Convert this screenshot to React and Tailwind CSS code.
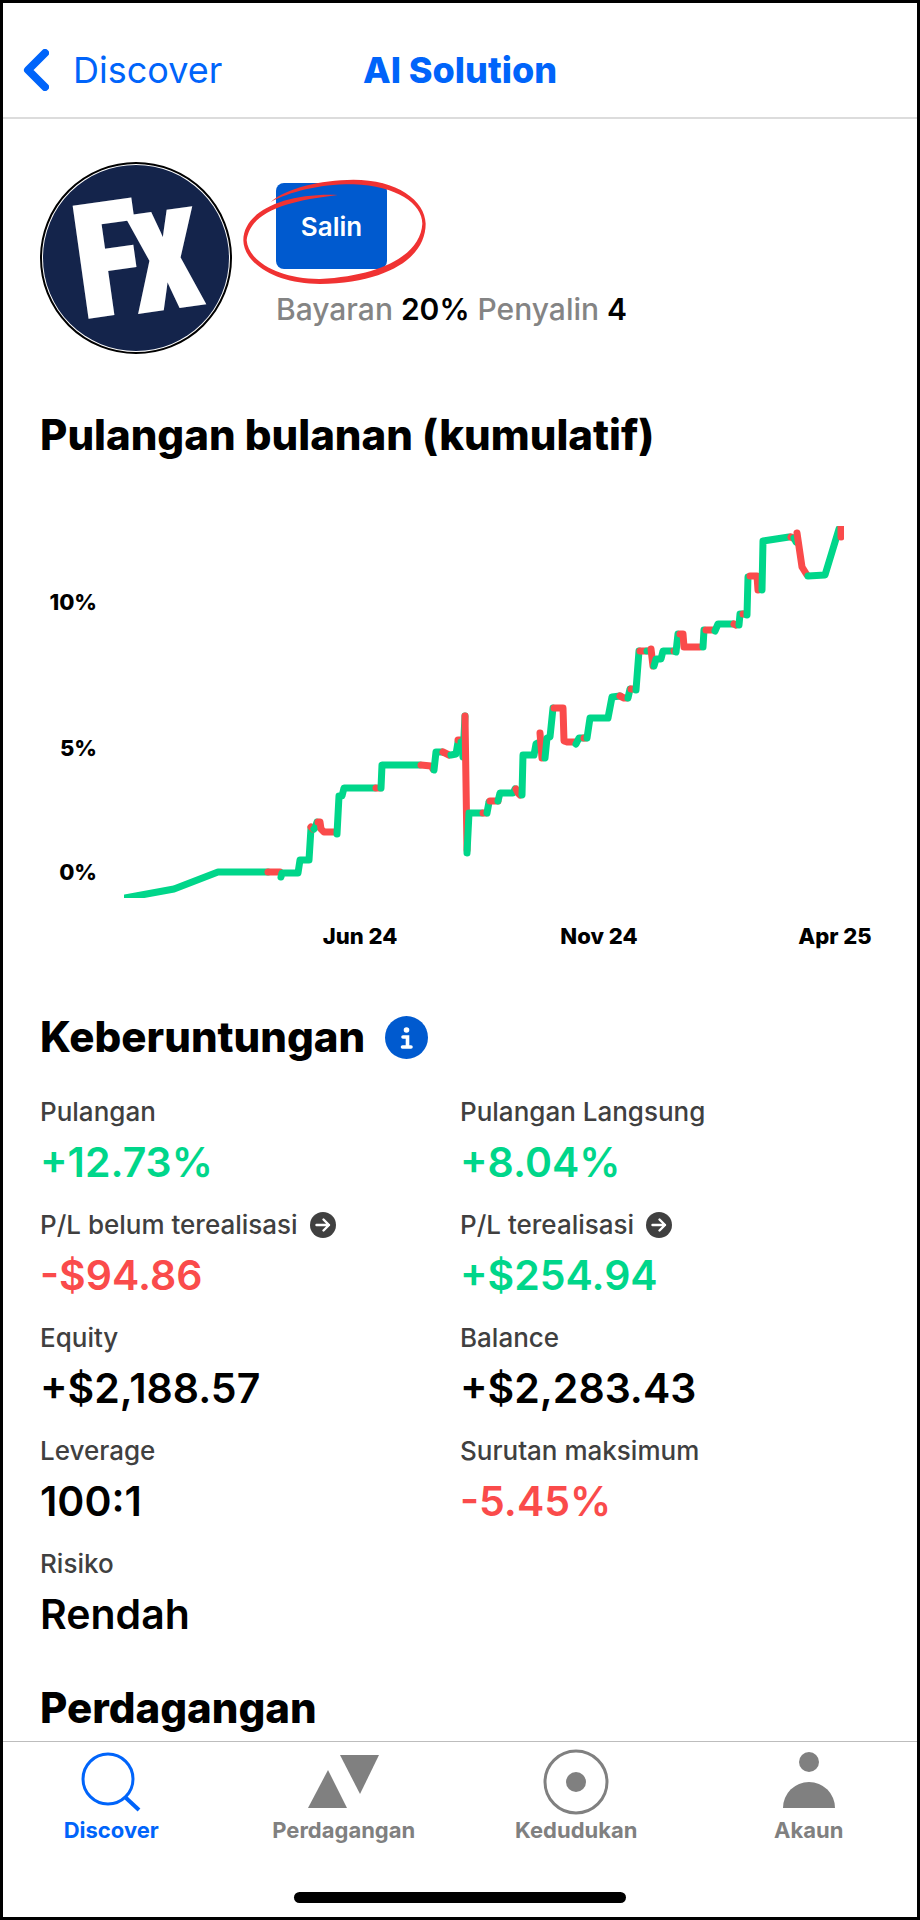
import React from 'react';

const GREEN = '#00d68a';
const RED = '#fa4b4b';

// --- DATA ---
const STATS = [
    { label: 'Pulangan', value: '+12.73%', color: 'text-[#00d68a]' },
    { label: 'Pulangan Langsung', value: '+8.04%', color: 'text-[#00d68a]' },
    { label: 'P/L belum terealisasi', value: '-$94.86', color: 'text-[#fa4b4b]', link: true },
    { label: 'P/L terealisasi', value: '+$254.94', color: 'text-[#00d68a]', link: true },
    { label: 'Equity', value: '+$2,188.57', color: 'text-black' },
    { label: 'Balance', value: '+$2,283.43', color: 'text-black' },
    { label: 'Leverage', value: '100:1', color: 'text-black' },
    { label: 'Surutan maksimum', value: '-5.45%', color: 'text-[#fa4b4b]' },
    { label: 'Risiko', value: 'Rendah', color: 'text-black' },
];

// g = up, r = down
const SEGMENTS = [
    ['g', '125,898 174,889 218,872 268,872'],
    ['r', '268,872 280,872'],
    ['g', '281,877 282,873 298,873 300,860 309,860 311,828'],
    ['r', '311,827 313,829'],
    ['g', '314,829 315,828 317,822'],
    ['r', '318,822 320,822 321,829 324,832 335,832'],
    ['g', '337,834 339,796 342,796 344,788 375,788'],
    ['r', '376,788 380,788'],
    ['g', '381,788 382,765 420,765'],
    ['r', '421,765 431,766 433,769'],
    ['g', '434,770 436,752 442,752'],
    ['r', '443,752 449,755'],
    ['g', '451,755 456,754 458,742'],
    ['r', '458,740 461,740'],
    ['g', '461,742 463,757 465,716'],
    ['r', '465,716 467,850'],
    ['g', '467,853 469,813 482,813'],
    ['r', '483,813 486,813'],
    ['g', '487,813 489,802'],
    ['r', '490,801 498,801'],
    ['g', '498,801 500,793 513,793 515,789'],
    ['r', '516,789 518,793 520,795'],
    ['g', '522,795 523,755 534,755 536,744 540,742'],
    ['r', '540,733 542,758'],
    ['g', '545,758 547,738 550,737 553,708'],
    ['r', '554,708 563,708 564,741 567,742 575,742'],
    ['g', '576,744 579,738 584,738'],
    ['r', '584,738 586,738'],
    ['g', '587,738 590,718 608,718 612,697 620,696'],
    ['r', '620,696 624,698 627,698'],
    ['g', '628,698 630,689'],
    ['r', '631,689 633,689'],
    ['g', '636,690 639,651'],
    ['r', '640,651 646,651'],
    ['g', '647,651 650,651'],
    ['r', '651,649 653,666'],
    ['g', '654,666 656,659 661,659 663,651 673,651'],
    ['r', '674,651 675,651'],
    ['g', '676,652 678,634'],
    ['r', '680,634 683,634 684,647 700,647'],
    ['g', '703,647 704,630'],
    ['r', '706,630 714,630'],
    ['g', '715,631 718,624 733,624'],
    ['r', '734,624 736,625'],
    ['g', '739,625 740,614 743,614'],
    ['r', '743,614 745,614'],
    ['g', '747,615 748,577'],
    ['r', '750,576 757,576 758,590'],
    ['g', '762,590 763,541 789,537'],
    ['r', '791,537 793,538'],
    ['g', '794,538 796,542'],
    ['r', '797,533 802,567 807,575'],
    ['g', '808,576 825,575 839,529'],
    ['r', '841,522 841,537'],
];

const Y_LABELS = [{ text: '10%', y: 610 }, { text: '5%', y: 756 }, { text: '0%', y: 880 }];
const X_LABELS = [{ text: 'Jun 24', x: 360 }, { text: 'Nov 24', x: 599 }, { text: 'Apr 25', x: 835 }];

// --- ICONS ---
const SearchIcon = () => (
    <svg viewBox="0 0 72 70" className="h-[70px] w-[72px]" fill="none" stroke="currentColor" strokeWidth="3">
        <circle cx="33" cy="33" r="25" />
        <path d="M50 51 L64 64" strokeWidth="4" />
    </svg>
);

const TradeIcon = () => (
    <svg viewBox="0 0 72 70" className="h-[70px] w-[72px]" fill="currentColor">
        <path d="M0 62 L39 62 L20 24 Z" />
        <path d="M32 9 L71 9 L52 48 Z" />
    </svg>
);

const PositionIcon = () => (
    <svg viewBox="0 0 72 70" className="h-[70px] w-[72px]">
        <circle cx="36" cy="36" r="31" fill="none" stroke="currentColor" strokeWidth="3" />
        <circle cx="36" cy="36" r="10" fill="currentColor" />
    </svg>
);

const AccountIcon = () => (
    <svg viewBox="0 0 72 70" className="h-[70px] w-[72px]" fill="currentColor">
        <circle cx="36" cy="16" r="10" />
        <path d="M10 62 A26 26 0 0 1 62 62 Z" />
    </svg>
);

const InfoIcon = () => (
    <svg viewBox="0 0 43 43" className="h-[43px] w-[43px]">
        <circle cx="21.5" cy="21.5" r="21.5" fill="#005acf" />
        <circle cx="21.5" cy="14" r="2.8" fill="#fff" />
        <path d="M18 21 H22.5 V31 M17.5 31 H26" fill="none" stroke="#fff" strokeWidth="3.6" strokeLinecap="round" />
    </svg>
);

const ArrowIcon = () => (
    <svg viewBox="0 0 26 26" className="h-[26px] w-[26px]">
        <circle cx="13" cy="13" r="13" fill="#404040" />
        <path d="M6.5 13 H19 M13.5 7.5 L19 13 L13.5 18.5" fill="none" stroke="#fff" strokeWidth="2.4" strokeLinecap="round" strokeLinejoin="round" />
    </svg>
);

const TABS = [
    { name: 'Discover', Icon: SearchIcon, active: true },
    { name: 'Perdagangan', Icon: TradeIcon },
    { name: 'Kedudukan', Icon: PositionIcon },
    { name: 'Akaun', Icon: AccountIcon },
];

// --- COMPONENTS ---
const Avatar = () => (
    <svg viewBox="0 0 192 192" className="h-48 w-48 shrink-0 overflow-visible" role="img" aria-label="FX">
        <circle cx="96" cy="96" r="95" fill="#fff" stroke="#000" strokeWidth="2" />
        <circle cx="96" cy="96" r="93" fill="#14244b" />
        <g fill="#fff" stroke="#fff" fontWeight="700" fontFamily='"Noto Sans Mono CJK SC", "Noto Sans CJK SC", sans-serif'>
            <text x="39" y="156" fontSize="148" strokeWidth="4" transform="rotate(-8 39 156)">F</text>
            <text x="101" y="148" fontSize="124" strokeWidth="7" transform="rotate(-8 101 148)">X</text>
        </g>
    </svg>
);

const Chart = () => (
    <svg viewBox="3 461 914 510" className="block w-full">
        <clipPath id="plot">
            <rect x="124" y="526" width="720" height="372" />
        </clipPath>
        <g clipPath="url(#plot)" fill="none" strokeWidth="7" strokeLinecap="round" strokeLinejoin="round">
            {SEGMENTS.map(([dir, points], i) => (
                <polyline key={i} points={points} stroke={dir === 'g' ? GREEN : RED} />
            ))}
        </g>
        <g fontSize="22" fontWeight="800" fill="#000">
            {Y_LABELS.map(l => <text key={l.text} x="97" y={l.y} textAnchor="end">{l.text}</text>)}
            {X_LABELS.map(l => <text key={l.text} x={l.x} y="944" textAnchor="middle">{l.text}</text>)}
        </g>
    </svg>
);

const Stat = ({ label, value, color, link }) => (
    <div>
        <dt className="flex items-center gap-3 text-[26px] leading-[30px] font-medium text-[#404040]">
            {label}
            {link && <a href="#detail" aria-label={label}><ArrowIcon /></a>}
        </dt>
        <dd className={`mt-[10px] text-[41px] leading-[50px] font-semibold ${color}`}>{value}</dd>
    </div>
);

export default function App() {
    return (
        <div className="flex min-h-screen flex-col border-[3px] border-black bg-white font-['Inter',sans-serif] text-black">
            <header className="grid grid-cols-[1fr_auto_1fr] items-center border-b-2 border-[#dcdcdc] pt-[45px] pb-[25px] text-[36px] leading-[44px] text-[#0064fa]">
                <a href="#discover" className="flex items-center gap-6 pl-5">
                    <svg viewBox="0 0 26 42" className="h-[42px] w-[26px]" fill="none" stroke="currentColor" strokeWidth="8" strokeLinecap="round" strokeLinejoin="round">
                        <path d="M22 4 L5 21 L22 38" />
                    </svg>
                    Discover
                </a>
                <h1 className="font-extrabold">AI Solution</h1>
            </header>

            <main className="flex-1">
                <section className="flex gap-11 px-[37px] pt-[43px]">
                    <Avatar />
                    <div className="pt-[21px]">
                        <div className="relative w-fit">
                            <button type="button" className="h-[86px] w-[111px] rounded-lg bg-[#005acf] text-[26px] font-semibold text-white">Salin</button>
                            <svg viewBox="660 110 567 330" className="pointer-events-none absolute -top-[6px] -left-9 h-[110px] w-[189px] max-w-none" fill="#f03232">
                                <path d="M752 185 C800 143 900 119 1000 118 C1130 118 1216 180 1217 250 C1217 348 1110 427 900 431 C770 431 671 370 670 300 C670 220 780 158 953 164 C800 182 690 215 680 300 C686 365 780 417 900 416 C1090 406 1202 340 1207 250 C1207 190 1130 137 1000 132 C900 131 810 154 752 185 Z" />
                            </svg>
                        </div>
                        <p className="mt-[22px] text-[30px] leading-9 font-medium text-[#848484]">
                            Bayaran <span className="font-semibold text-black">20%</span> Penyalin <span className="font-semibold text-black">4</span>
                        </p>
                    </div>
                </section>

                <section>
                    <h2 className="mt-[55px] px-[37px] text-[42px] leading-[52px] font-extrabold">Pulangan bulanan (kumulatif)</h2>
                    <Chart />
                </section>

                <section className="px-[37px] pt-10">
                    <div className="flex items-center gap-5">
                        <h2 className="text-[42px] leading-[52px] font-extrabold">Keberuntungan</h2>
                        <button type="button" aria-label="Info"><InfoIcon /></button>
                    </div>
                    <dl className="mt-[34px] grid grid-cols-2 gap-y-[23px]">
                        {STATS.map(s => <Stat key={s.label} {...s} />)}
                    </dl>
                </section>

                <h2 className="mt-[43px] px-[37px] text-[42px] leading-[52px] font-extrabold">Perdagangan</h2>
            </main>

            <footer className="border-t border-[#bdbdbd]">
                <nav className="-mx-2 grid grid-cols-4 pt-1">
                    {TABS.map(({ name, Icon, active }) => (
                        <a key={name} href={`#${name.toLowerCase()}`} className={`flex flex-col items-center text-[22px] leading-7 font-bold ${active ? 'text-[#0064fa]' : 'text-[#808080]'}`}>
                            <Icon />
                            {name}
                        </a>
                    ))}
                </nav>
                <div className="mx-auto mt-12 mb-[14px] h-[11px] w-[332px] rounded-full bg-black" />
            </footer>
        </div>
    );
}
